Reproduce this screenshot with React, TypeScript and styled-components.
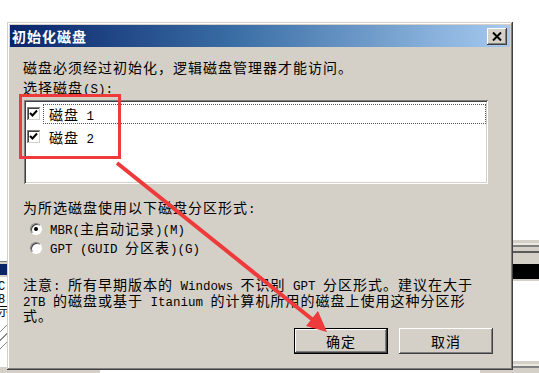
import React from "react";
import styled, { createGlobalStyle } from "styled-components";

const Global = createGlobalStyle`
  html, body { margin: 0; padding: 0; background: #fff; }
  body { font-family: "Noto Sans CJK SC", sans-serif; }
`;

const Desktop = styled.div`
  position: relative;
  width: 539px;
  height: 373px;
  overflow: hidden;
  background: #fff;
`;

/* ---------- background windows (behind the dialog) ---------- */
const BgWindow = styled.div<{ $left: number; $top: number; $w: number; $h: number }>`
  position: absolute;
  left: ${(p) => p.$left}px;
  top: ${(p) => p.$top}px;
  width: ${(p) => p.$w}px;
  height: ${(p) => p.$h}px;
  box-sizing: border-box;
  background: #d4d0c8;
  display: flex;
  flex-direction: column;
`;

const Stripe = styled.div<{ $h: number; $c: string }>`
  height: ${(p) => p.$h}px;
  background: ${(p) => p.$c};
  flex: none;
`;

const BgContent = styled.div`
  flex: 1;
  background: #fff;
  display: flex;
  flex-direction: column;
  align-items: flex-start;
  padding: 4px 0 0 98px;
  font-family: "Liberation Mono", "Noto Sans CJK SC", monospace;
  font-size: 12px;
  line-height: 13px;
  color: #000;
`;

const Hatch = styled.div`
  width: 60px;
  height: 26px;
  margin: 4px 0 0 -40px;
  background: repeating-linear-gradient(135deg, #fff 0 5px, #8a8a8a 5px 6px);
`;

/* ---------- dialog ---------- */
const Dialog = styled.div`
  position: absolute;
  left: 7px;
  top: 22px;
  width: 506px;
  height: 348px;
  box-sizing: border-box;
  background: #d4d0c8;
  padding: 3px;
  display: flex;
  flex-direction: column;
  box-shadow: inset -1px -1px #404040, inset 1px 1px #d4d0c8,
    inset -2px -2px #808080, inset 2px 2px #fff;
  font-size: 14px;
  letter-spacing: 1px;
  color: #000;
`;

const TitleBar = styled.div`
  height: 22px;
  flex: none;
  display: flex;
  align-items: center;
  justify-content: space-between;
  padding: 0 3px 0 2px;
  background: linear-gradient(to right, #0a246a 0%, #3a6ea5 45%, #a6caf0 100%);
`;

const TitleText = styled.span`
  color: #fff;
  font-weight: bold;
  font-size: 14px;
  letter-spacing: 1px;
  line-height: 22px;
`;

const CloseButton = styled.div`
  width: 20px;
  height: 17px;
  box-sizing: border-box;
  background: #d4d0c8;
  display: flex;
  align-items: center;
  justify-content: center;
  box-shadow: inset -1px -1px #404040, inset 1px 1px #fff, inset -2px -2px #808080;
`;

const Body = styled.div`
  flex: 1;
  display: flex;
  flex-direction: column;
  padding: 11px 17px 13px 13px;
`;

const Line = styled.div<{ $mt?: number }>`
  line-height: 18px;
  height: 18px;
  margin-top: ${(p) => p.$mt ?? 0}px;
  white-space: nowrap;
`;

const Latin = styled.span`
  font-family: "Liberation Mono", monospace;
  font-size: 12.5px;
  letter-spacing: 0;
  white-space: pre;
`;

const ListBox = styled.div`
  margin: 4px 0 0 1px;
  width: 464px;
  height: 84px;
  box-sizing: border-box;
  padding: 2px;
  background: #fff;
  box-shadow: inset 1px 1px #808080, inset -1px -1px #fff, inset 2px 2px #404040,
    inset -2px -2px #d4d0c8;
  display: flex;
  flex-direction: column;
`;

const Row = styled.div`
  height: 23px;
  display: flex;
  align-items: center;
`;

const CheckBox = styled.div`
  width: 13px;
  height: 13px;
  margin-left: 1px;
  box-sizing: border-box;
  background: #fff;
  box-shadow: inset 1px 1px #808080, inset -1px -1px #d4d0c8, inset 2px 2px #404040;
  display: flex;
  align-items: center;
  justify-content: center;
  flex: none;
`;

const ItemLabel = styled.div<{ $focus?: boolean }>`
  flex: 1;
  height: 20px;
  margin-left: 3px;
  padding-left: 5px;
  box-sizing: border-box;
  line-height: 18px;
  border: 1px dotted ${(p) => (p.$focus ? "#555" : "transparent")};
`;

const RadioRow = styled.div<{ $mt: number }>`
  display: flex;
  align-items: center;
  height: 18px;
  margin: ${(p) => p.$mt}px 0 0 7px;
  gap: 8px;
  white-space: nowrap;
  line-height: 18px;
`;

const Radio = styled.div<{ $on?: boolean }>`
  width: 12px;
  height: 12px;
  box-sizing: border-box;
  border-radius: 50%;
  background: #fff;
  border: 1px solid;
  border-color: #808080 #fff #fff #808080;
  box-shadow: inset 1px 1px #404040;
  display: flex;
  align-items: center;
  justify-content: center;
  flex: none;
  &::after {
    content: "";
    width: 4px;
    height: 4px;
    border-radius: 50%;
    background: ${(p) => (p.$on ? "#000" : "transparent")};
  }
`;

const Note = styled.div`
  margin-top: 20px;
  display: flex;
  flex-direction: column;
`;

const NoteLine = styled.div`
  height: 15.5px;
  line-height: 15.5px;
  white-space: nowrap;
`;

const Buttons = styled.div`
  margin-top: auto;
  display: flex;
  justify-content: flex-end;
  gap: 11px;
`;

const Button = styled.div<{ $default?: boolean }>`
  width: 94px;
  height: 26px;
  box-sizing: border-box;
  background: #d4d0c8;
  display: flex;
  align-items: center;
  justify-content: center;
  font-size: 14px;
  letter-spacing: 1px;
  box-shadow: ${(p) =>
    p.$default
      ? "inset 0 0 0 1px #000, inset -2px -2px #404040, inset 2px 2px #fff, inset -3px -3px #808080"
      : "inset -1px -1px #404040, inset 1px 1px #fff, inset -2px -2px #808080"};
`;

/* ---------- annotation overlay ---------- */
const RedBox = styled.div`
  position: absolute;
  left: 19px;
  top: 94px;
  width: 102px;
  height: 65px;
  box-sizing: border-box;
  border: 3px solid #ee3a3a;
  pointer-events: none;
`;

const Overlay = styled.svg`
  position: absolute;
  left: 0;
  top: 0;
  pointer-events: none;
`;

const Check = () => (
  <svg width="9" height="9" viewBox="0 0 9 9">
    <path d="M1 4 L3.5 6.5 L8 1.5" fill="none" stroke="#000" strokeWidth="2" />
  </svg>
);

export default function App() {
  return (
    <Desktop>
      <Global />
      <BgWindow $left={-100} $top={261} $w={200} $h={120}>
        <Stripe $h={1} $c="#808080" />
        <Stripe $h={2} $c="#d4d0c8" />
        <Stripe $h={11} $c="#0a246a" />
        <Stripe $h={2} $c="#d4d0c8" />
        <BgContent>
          <span>C</span>
          <span>8:</span>
          <span>示</span>
          <Hatch />
        </BgContent>
        <Stripe $h={14} $c="#d4d0c8" />
      </BgWindow>
      <BgWindow $left={480} $top={240} $w={120} $h={140}>
        <Stripe $h={3} $c="#d4d0c8" />
        <Stripe $h={2} $c="#ece9e2" />
        <Stripe $h={2} $c="#808080" />
        <Stripe $h={4} $c="#d4d0c8" />
        <Stripe $h={2} $c="#5a5a5a" />
        <Stripe $h={11} $c="#d4d0c8" />
        <Stripe $h={15} $c="#000" />
        <Stripe $h={2} $c="#d4d0c8" />
        <Stripe $h={80} $c="#fff" />
        <Stripe $h={3} $c="#d4d0c8" />
        <Stripe $h={2} $c="#ece9e2" />
        <Stripe $h={2} $c="#808080" />
      </BgWindow>

      <Dialog>
        <TitleBar>
          <TitleText>初始化磁盘</TitleText>
          <CloseButton>
            <svg width="10" height="9" viewBox="0 0 10 9">
              <path d="M1 0.5 L9 8.5 M9 0.5 L1 8.5" stroke="#000" strokeWidth="2" />
            </svg>
          </CloseButton>
        </TitleBar>
        <Body>
          <Line>磁盘必须经过初始化，逻辑磁盘管理器才能访问。</Line>
          <Line $mt={2}>
            选择磁盘<Latin>(S):</Latin>
          </Line>
          <ListBox>
            <Row>
              <CheckBox>
                <Check />
              </CheckBox>
              <ItemLabel $focus>
                磁盘<Latin> 1</Latin>
              </ItemLabel>
            </Row>
            <Row>
              <CheckBox>
                <Check />
              </CheckBox>
              <ItemLabel>
                磁盘<Latin> 2</Latin>
              </ItemLabel>
            </Row>
          </ListBox>
          <Line $mt={14}>
            为所选磁盘使用以下磁盘分区形式<Latin>:</Latin>
          </Line>
          <RadioRow $mt={4}>
            <Radio $on />
            <span>
              <Latin>MBR(</Latin>主启动记录<Latin>)(M)</Latin>
            </span>
          </RadioRow>
          <RadioRow $mt={1}>
            <Radio />
            <span>
              <Latin>GPT (GUID </Latin>分区表<Latin>)(G)</Latin>
            </span>
          </RadioRow>
          <Note>
            <NoteLine>
              注意<Latin>: </Latin>所有早期版本的<Latin> Windows </Latin>不识别
              <Latin> GPT </Latin>分区形式。建议在大于
            </NoteLine>
            <NoteLine>
              <Latin>2TB </Latin>的磁盘或基于<Latin> Itanium </Latin>
              的计算机所用的磁盘上使用这种分区形
            </NoteLine>
            <NoteLine>式。</NoteLine>
          </Note>
          <Buttons>
            <Button $default>确定</Button>
            <Button>取消</Button>
          </Buttons>
        </Body>
      </Dialog>

      <RedBox />
      <Overlay width="539" height="373" viewBox="0 0 539 373">
        <line x1="117" y1="163" x2="313" y2="320" stroke="#ee3a3a" strokeWidth="4" />
        <polygon points="327,332 306,326 318,311" fill="#ee3a3a" />
      </Overlay>
    </Desktop>
  );
}
